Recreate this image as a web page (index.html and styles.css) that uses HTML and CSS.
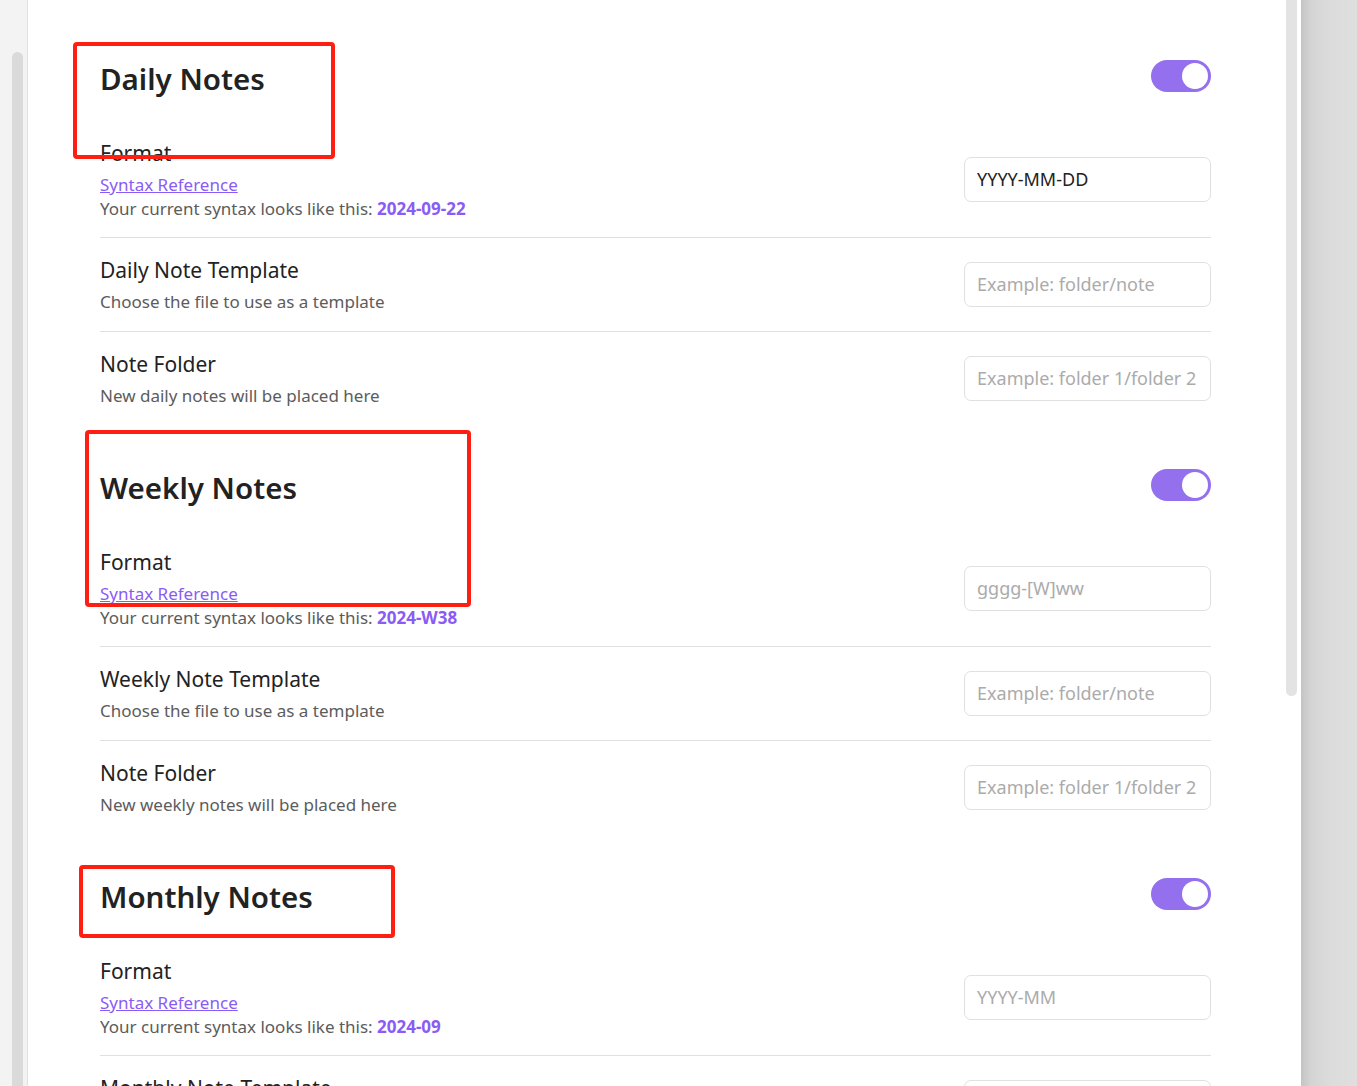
FILE: index.html
```html
<!DOCTYPE html>
<html lang="en">
<head>
<meta charset="utf-8">
<title>Periodic Notes Settings</title>
<link rel="stylesheet" href="styles.css">
</head>
<body>
<div class="app">
  <div class="leftbar"><div class="left-thumb"></div></div>
  <div class="panel">
    <div class="content">

      <div class="heading-row">
        <h2 class="heading">Daily Notes</h2>
        <div class="toggle"><div class="knob"></div></div>
      </div>
      <div class="item first">
        <div class="info">
          <div class="name">Format</div>
          <div class="desc"><a class="link" href="#">Syntax Reference</a><br>Your current syntax looks like this: <b class="val">2024-09-22</b></div>
        </div>
        <div class="field filled">YYYY-MM-DD</div>
      </div>
      <div class="item">
        <div class="info">
          <div class="name">Daily Note Template</div>
          <div class="desc">Choose the file to use as a template</div>
        </div>
        <div class="field">Example: folder/note</div>
      </div>
      <div class="item">
        <div class="info">
          <div class="name">Note Folder</div>
          <div class="desc">New daily notes will be placed here</div>
        </div>
        <div class="field">Example: folder 1/folder 2</div>
      </div>

      <div class="heading-row">
        <h2 class="heading">Weekly Notes</h2>
        <div class="toggle"><div class="knob"></div></div>
      </div>
      <div class="item first">
        <div class="info">
          <div class="name">Format</div>
          <div class="desc"><a class="link" href="#">Syntax Reference</a><br>Your current syntax looks like this: <b class="val">2024-W38</b></div>
        </div>
        <div class="field">gggg-[W]ww</div>
      </div>
      <div class="item">
        <div class="info">
          <div class="name">Weekly Note Template</div>
          <div class="desc">Choose the file to use as a template</div>
        </div>
        <div class="field">Example: folder/note</div>
      </div>
      <div class="item">
        <div class="info">
          <div class="name">Note Folder</div>
          <div class="desc">New weekly notes will be placed here</div>
        </div>
        <div class="field">Example: folder 1/folder 2</div>
      </div>

      <div class="heading-row">
        <h2 class="heading">Monthly Notes</h2>
        <div class="toggle"><div class="knob"></div></div>
      </div>
      <div class="item first">
        <div class="info">
          <div class="name">Format</div>
          <div class="desc"><a class="link" href="#">Syntax Reference</a><br>Your current syntax looks like this: <b class="val">2024-09</b></div>
        </div>
        <div class="field">YYYY-MM</div>
      </div>
      <div class="item">
        <div class="info">
          <div class="name">Monthly Note Template</div>
          <div class="desc">Choose the file to use as a template</div>
        </div>
        <div class="field">Example: folder/note</div>
      </div>

    </div>
    <div class="vscroll"><div class="thumb"></div></div>
  </div>
  <div class="shade"></div>
</div>

<div class="mark mark-daily"></div>
<div class="mark mark-weekly"></div>
<div class="mark mark-monthly"></div>
</body>
</html>
```
FILE: styles.css
```css
html, body {
  margin: 0;
  padding: 0;
  height: 100%;
  overflow: hidden;
  background: #ffffff;
  font-family: "Noto Sans", "Open Sans", sans-serif;
  color: #222222;
}

.app {
  display: flex;
  height: 1086px;
  overflow: hidden;
}

.leftbar {
  flex: 0 0 28px;
  box-sizing: border-box;
  background: #f3f3f3;
  border-right: 1px solid #e2e2e2;
  padding: 52px 0 0 12px;
}

.left-thumb {
  width: 11px;
  height: 1100px;
  background: #dadada;
  border-radius: 6px 6px 0 0;
}

.panel {
  flex: 0 0 1273px;
  display: flex;
  background: #ffffff;
  overflow: hidden;
}

.content {
  flex: 0 0 1111px;
  padding: 16px 75px 0 72px;
}

.vscroll {
  flex: 0 0 15px;
}

.thumb {
  width: 11px;
  height: 696px;
  background: #e3e3e3;
  border-radius: 0 0 6px 6px;
}

.shade {
  flex: 1 1 auto;
  background: linear-gradient(to right, #c4c4c4 0px, #d4d4d4 10px, #dcdcdc 30px, #dfdfdf 56px);
}

.heading-row {
  display: flex;
  align-items: center;
  justify-content: space-between;
  padding: 39px 0 24px;
}

.heading {
  margin: 0;
  padding-top: 6px;
  font-size: 29.5px;
  line-height: 36px;
  font-weight: 600;
  color: #222222;
}

.toggle {
  width: 60px;
  height: 32px;
  border-radius: 16px;
  background: #9470ee;
  display: flex;
  align-items: center;
  justify-content: flex-end;
  padding: 0 3px;
  box-sizing: border-box;
}

.knob {
  width: 26px;
  height: 26px;
  border-radius: 50%;
  background: #ffffff;
}

.item {
  display: flex;
  align-items: center;
  justify-content: space-between;
  padding: 18px 0 17px;
  border-top: 1px solid #e0e0e0;
}

.item.first {
  border-top: none;
  padding-bottom: 16px;
}

.name {
  font-size: 21px;
  line-height: 28px;
  color: #222222;
}

.desc {
  margin-top: 6px;
  font-size: 17px;
  line-height: 24px;
  color: #5c5c5c;
}

.link {
  color: #8a5cf5;
  text-decoration: underline;
}

.val {
  color: #8a5cf5;
  font-weight: 700;
}

.field {
  flex: 0 0 247px;
  height: 45px;
  margin-bottom: 2px;
  box-sizing: border-box;
  border: 1px solid #e0e0e0;
  border-radius: 7px;
  padding: 0 12px;
  display: flex;
  align-items: center;
  font-size: 18px;
  color: #ababab;
  white-space: nowrap;
  overflow: hidden;
}

.field.filled {
  color: #222222;
}

.mark {
  position: absolute;
  border: 4px solid #ff1f12;
  border-radius: 4px;
  box-sizing: border-box;
}

.mark-daily {
  left: 73px;
  top: 42px;
  width: 262px;
  height: 117px;
}

.mark-weekly {
  left: 85px;
  top: 430px;
  width: 386px;
  height: 177px;
}

.mark-monthly {
  left: 79px;
  top: 865px;
  width: 316px;
  height: 73px;
}
```
